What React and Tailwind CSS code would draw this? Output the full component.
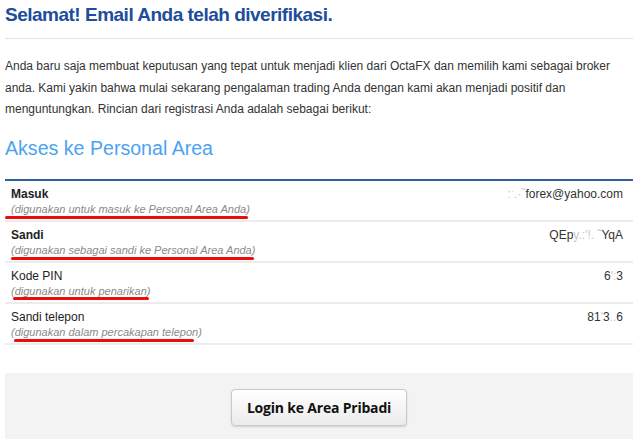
const rows = [
  {
    label: "Masuk",
    bold: true,
    hint: "(digunakan untuk masuk ke Personal Area Anda)",
    value: (
      <>
        <span className="text-[#c8c8c8]">:ˑ.·˜</span>forex@yahoo.com
      </>
    ),
    mark: "left-0 w-[243px] top-[35px]",
  },
  {
    label: "Sandi",
    bold: true,
    hint: "(digunakan sebagai sandi ke Personal Area Anda)",
    value: (
      <>
        QEp<span className="text-[#c8c8c8]">y.:'!. ˜</span>YqA
      </>
    ),
    mark: "left-[6px] w-[243px] top-[35px]",
  },
  {
    label: "Kode PIN",
    hint: "(digunakan untuk penarikan)",
    value: (
      <>
        6<span className="text-[#c8c8c8]">':</span>3
      </>
    ),
    mark: "left-[8px] w-[136px] top-[34px]",
  },
  {
    label: "Sandi telepon",
    hint: "(digunakan dalam percakapan telepon)",
    value: (
      <>
        81<span className="text-[#c8c8c8]">'</span>3<span className="text-[#c8c8c8]">..</span>6
      </>
    ),
    mark: "left-[9px] w-[180px] top-[35px]",
  },
];

const App = () => {
  return (
    <div className="w-[640px] h-[443px] bg-white font-['Liberation_Sans',Arial,sans-serif] overflow-hidden">
      <div className="ml-[5px] w-[628px] pt-[3px]">
        {/* Header */}
        <h1 className="text-[19px] leading-[24px] font-bold text-[#1d4d9b] tracking-[-0.5px]">
          Selamat! Email Anda telah diverifikasi.
        </h1>
        <div className="mt-[11px] h-px bg-[#e3e3e3]" />

        <p className="mt-[17px] text-[12px] leading-[21.5px] text-[#333]">
          Anda baru saja membuat keputusan yang tepat untuk menjadi klien dari OctaFX dan memilih kami sebagai broker
          anda. Kami yakin bahwa mulai sekarang pengalaman trading Anda dengan kami akan menjadi positif dan
          menguntungkan. Rincian dari registrasi Anda adalah sebagai berikut:
        </p>

        <h2 className="mt-[15px] text-[19.6px] leading-[24px] text-[#4ba3f2]">Akses ke Personal Area</h2>

        {/* Credentials table */}
        <div className="mt-[19px] border-t-2 border-[#2f6199]">
          {rows.map((row) => (
            <div
              key={row.label}
              className="relative h-[41px] box-border border-b-2 border-[#ececec] flex justify-between pl-[6px] pr-[10px] pt-[5px]"
            >
              <div>
                <div className={`text-[12px] leading-[16px] text-[#222] ${row.bold ? "font-bold" : ""}`}>{row.label}</div>
                <div className="text-[11px] leading-[14px] italic text-[#8a8a8a]">{row.hint}</div>
              </div>
              <div className="text-[12px] leading-[16px] text-[#333]">{row.value}</div>
              <div className={`absolute h-[3px] rounded-full bg-[#ee0b0b] ${row.mark}`} />
            </div>
          ))}
        </div>

        {/* Footer */}
        <div className="mt-[28px] h-[66px] bg-[#f3f3f3] flex justify-center pt-[16px]">
          <button className="w-[176px] h-[37px] rounded-[4px] border border-[#c9c9c9] bg-gradient-to-b from-white to-[#ebebeb] shadow-[0_1px_2px_rgba(0,0,0,0.15)] font-['Open_Sans',sans-serif] font-bold text-[14px] tracking-[-0.2px] text-[#111]">
            Login ke Area Pribadi
          </button>
        </div>
      </div>
    </div>
  );
};

export default App;
